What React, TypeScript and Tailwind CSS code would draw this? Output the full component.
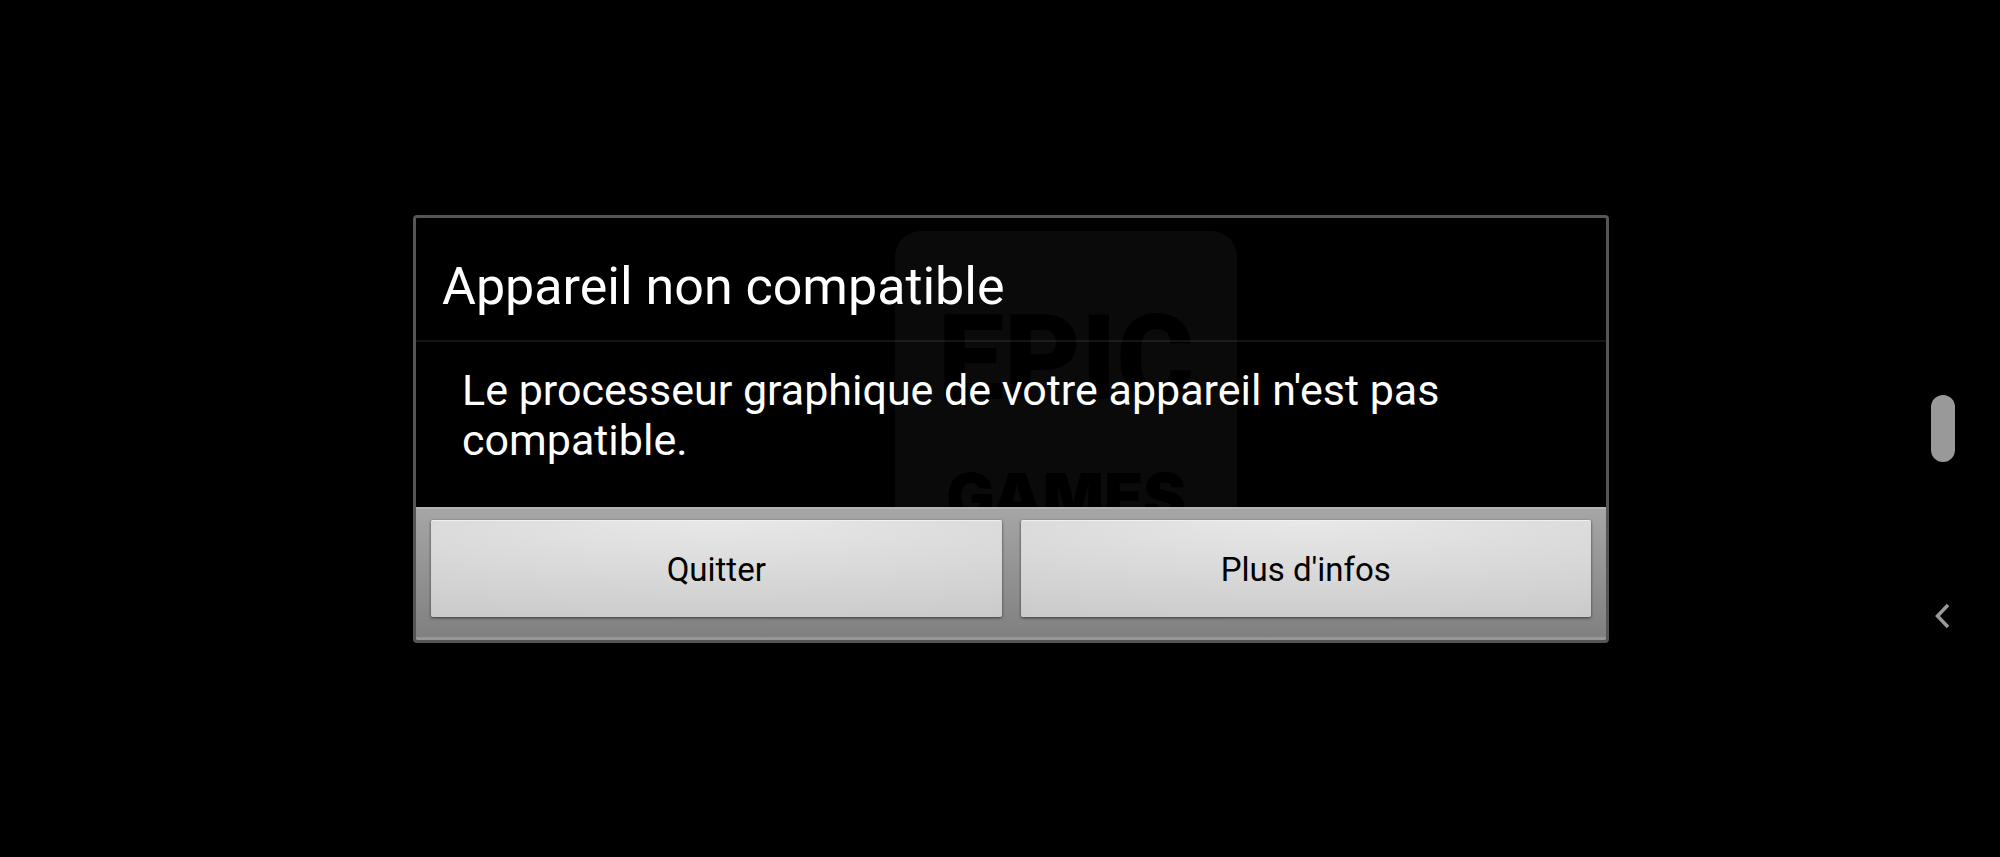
const actions = ["Quitter", "Plus d'infos"];

function Watermark() {
  return (
    <div
      aria-hidden="true"
      className="absolute top-[13px] left-[479px] w-[342px] h-[400px] rounded-t-[26px] bg-[#0a0a0a] text-black text-center select-none"
    >
      <div className="pt-[50px] font-black text-[118px] leading-[156px]">
        EPIC
      </div>
      <div className="mt-[29px] font-[Inter,sans-serif] font-black text-[64px] leading-[62px]">
        GAMES
      </div>
    </div>
  );
}

function Dialog() {
  return (
    <div
      role="alertdialog"
      aria-labelledby="dialog-title"
      aria-describedby="dialog-message"
      className="relative w-full max-w-[1196px] overflow-hidden rounded-[4px] border-3 border-[#555555] bg-black"
    >
      <Watermark />

      {/* Title */}
      <div className="relative border-b-2 border-white/8 px-[26px] pt-[39px] pb-[23px]">
        <h1 id="dialog-title" className="text-[52px] leading-[60px]">
          Appareil non compatible
        </h1>
      </div>

      {/* Message */}
      <p
        id="dialog-message"
        className="relative px-[46px] pt-[23px] pb-[42px] text-[43px] leading-[50px]"
      >
        Le processeur graphique de votre appareil n'est pas compatible.
      </p>

      {/* Buttons */}
      <div className="relative flex gap-[19px] border-t-2 border-b-3 border-t-[#b4b4b4] border-b-[#979797] bg-gradient-to-b from-[#a6a6a6] to-[#808080] px-[15px] pt-[11px] pb-[21px]">
        {actions.map((label) => (
          <button
            key={label}
            type="button"
            className="h-[97px] -mb-px flex-1 rounded-[2px] border-t border-[#f0f0f0] bg-[radial-gradient(120%_110%_at_top,#e8e8e8,#d6d6d6_60%,#cacaca)] pt-[2px] text-[33px] leading-[40px] text-black shadow-[0_1px_3px_#3a3a3a]"
          >
            {label}
          </button>
        ))}
      </div>
    </div>
  );
}

function NavBar() {
  return (
    <nav className="relative flex w-[114px] shrink-0 flex-col items-center justify-center">
      <button
        type="button"
        aria-label="Accueil"
        className="h-[67px] w-6 rounded-full bg-[#999999]"
      />
      <button
        type="button"
        aria-label="Retour"
        className="absolute top-[600px] left-[45px] text-[#999999]"
      >
        <svg
          className="h-8 w-6"
          fill="none"
          viewBox="0 0 24 32"
          stroke="currentColor"
          strokeWidth={3.5}
        >
          <path d="M17 5L6.500 16L17 27" />
        </svg>
      </button>
    </nav>
  );
}

export default function App() {
  return (
    <div className="flex min-h-screen bg-black font-[Roboto,sans-serif] text-white">
      <main className="flex flex-1 items-center justify-center pl-[136px]">
        <Dialog />
      </main>
      <NavBar />
    </div>
  );
}
